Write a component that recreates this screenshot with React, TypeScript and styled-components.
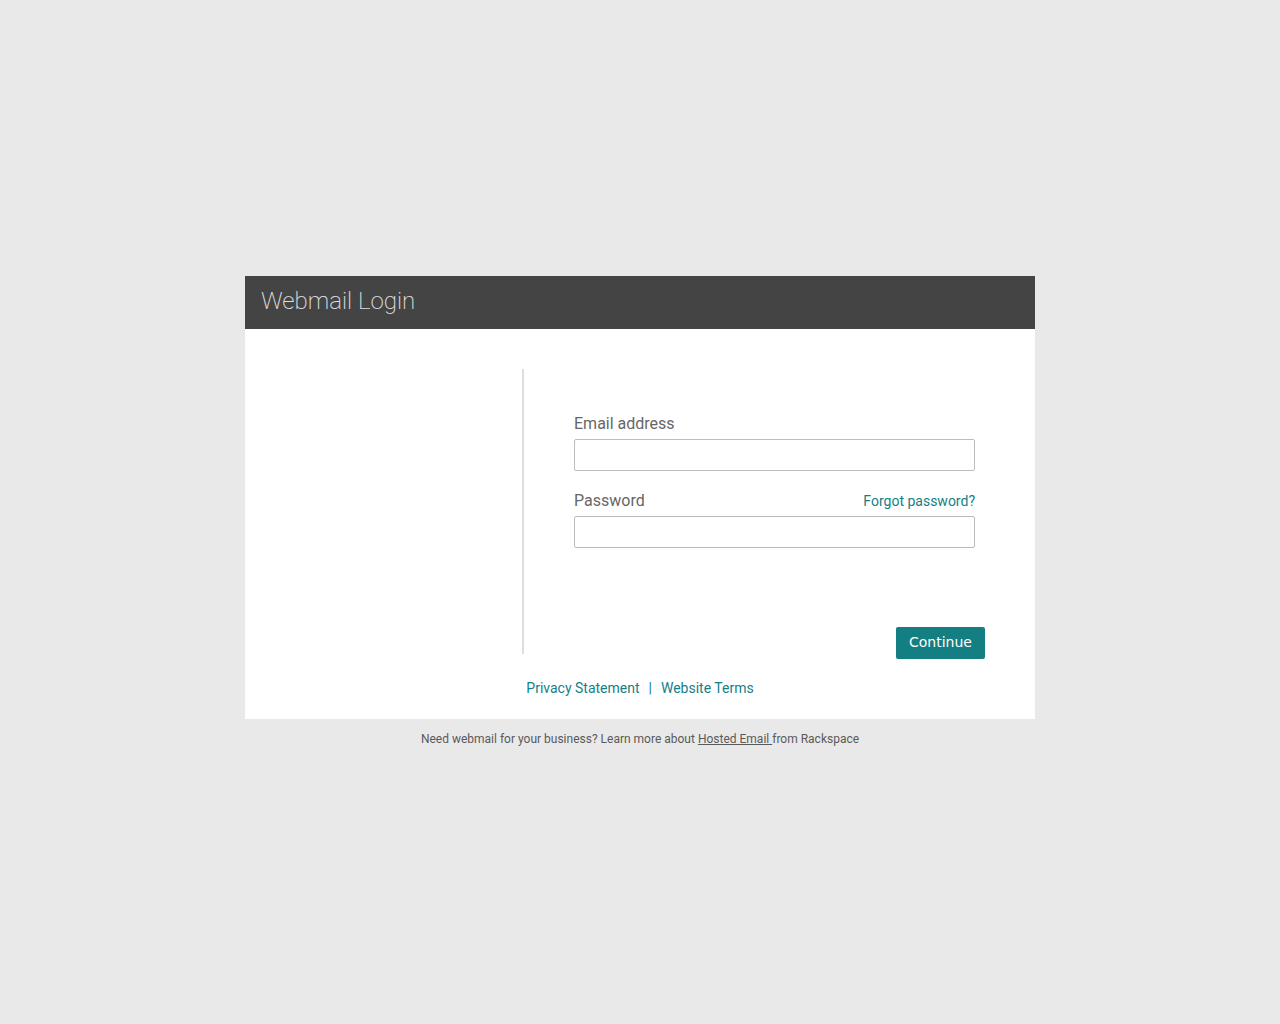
import React from "react";
import styled, { createGlobalStyle } from "styled-components";

const Global = createGlobalStyle`
  html, body { margin: 0; padding: 0; background: #e9e9e9; }
  body { font-family: Roboto, "Liberation Sans", sans-serif; }
  * { box-sizing: border-box; }
`;

const Page = styled.div`
  min-height: 1024px;
  padding-top: 276px;
  display: flex;
  flex-direction: column;
  align-items: center;
`;

const Card = styled.div`
  width: 790px;
  background: #fff;
`;

const Header = styled.div`
  height: 53px;
  background: #444444;
  display: flex;
  align-items: center;
  padding: 0 0 3px 16px;
`;

const Title = styled.h1`
  margin: 0;
  font-family: Roboto, sans-serif;
  font-weight: 200;
  font-size: 24px;
  color: #e0e0e0;
  line-height: 28px;
`;

const Body = styled.div`
  padding: 40px 0 23px;
`;

const Row = styled.div`
  display: flex;
  align-items: flex-start;
`;

const Side = styled.div`
  width: 277px;
`;

const Divider = styled.div`
  width: 2px;
  height: 285px;
  background: #dddddd;
`;

const Form = styled.form`
  flex: 1;
  padding: 45px 50px 0 50px;
  display: flex;
  flex-direction: column;
`;

const Field = styled.div<{ $mb: number }>`
  width: 401px;
  display: flex;
  flex-direction: column;
  margin-bottom: ${(p) => p.$mb}px;
`;

const LabelRow = styled.div`
  display: flex;
  justify-content: space-between;
  align-items: baseline;
  margin-bottom: 5px;
`;

const Label = styled.label`
  font-size: 16px;
  line-height: 20px;
  color: #666666;
`;

const Forgot = styled.a`
  font-size: 14px;
  color: #137f87;
  text-decoration: none;
`;

const Input = styled.input`
  height: 32px;
  width: 100%;
  border: 1px solid #bcbcbc;
  border-radius: 2px;
  padding: 4px 8px;
  font-size: 14px;
  outline: none;
`;

const Actions = styled.div`
  display: flex;
  justify-content: flex-end;
`;

const Button = styled.button`
  width: 89px;
  height: 32px;
  background: #137f82;
  color: #ffffff;
  border: none;
  border-radius: 2px;
  font-family: "DejaVu Sans", sans-serif;
  font-size: 14px;
  padding: 0 0 2px;
`;

const Links = styled.div`
  margin-top: 21px;
  display: flex;
  justify-content: center;
  gap: 9px;
  font-size: 14px;
  line-height: 16px;
  color: #137f87;
`;

const LinkA = styled.a`
  color: #137f87;
  text-decoration: none;
`;

const Footer = styled.div`
  margin-top: 13px;
  font-size: 12px;
  line-height: 14px;
  color: #5a5a5a;
  text-align: center;
`;

const FooterLink = styled.a`
  color: #5a5a5a;
  text-decoration: underline;
`;

export default function App() {
  return (
    <>
      <Global />
      <Page>
        <Card>
          <Header>
            <Title>Webmail Login</Title>
          </Header>
          <Body>
            <Row>
              <Side />
              <Divider />
              <Form onSubmit={(e) => e.preventDefault()}>
                <Field $mb={20}>
                  <LabelRow>
                    <Label htmlFor="email">Email address</Label>
                  </LabelRow>
                  <Input id="email" type="text" />
                </Field>
                <Field $mb={79}>
                  <LabelRow>
                    <Label htmlFor="pw">Password</Label>
                    <Forgot href="#">Forgot password?</Forgot>
                  </LabelRow>
                  <Input id="pw" type="password" />
                </Field>
                <Actions>
                  <Button type="submit">Continue</Button>
                </Actions>
              </Form>
            </Row>
            <Links>
              <LinkA href="#">Privacy Statement</LinkA>
              <span>|</span>
              <LinkA href="#">Website Terms</LinkA>
            </Links>
          </Body>
        </Card>
        <Footer>
          Need webmail for your business? Learn more about{" "}
          <FooterLink href="#">Hosted Email </FooterLink>from Rackspace
        </Footer>
      </Page>
    </>
  );
}
